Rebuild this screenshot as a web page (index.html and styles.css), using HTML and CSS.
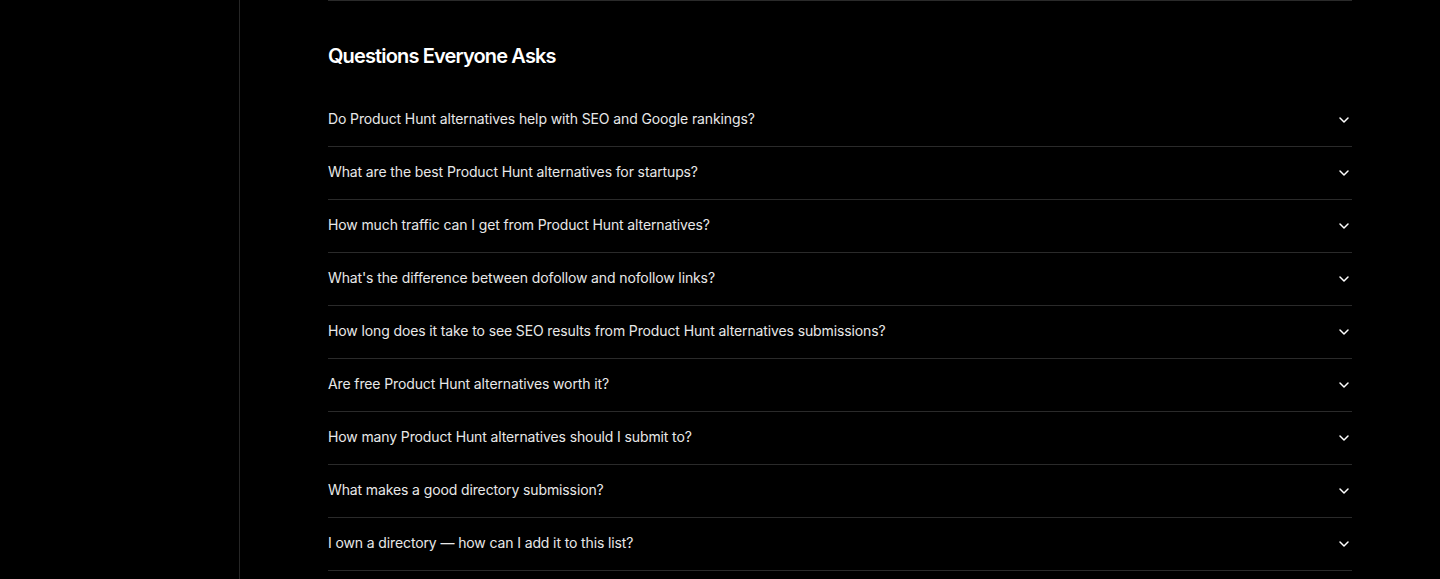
FILE: index.html
```html
<!DOCTYPE html>
<html lang="en">
<head>
<meta charset="utf-8">
<title>FAQ</title>
<link rel="stylesheet" href="styles.css">
</head>
<body>
<div class="layout">
  <aside class="sidebar"></aside>
  <main class="main">
    <div class="prev-section"></div>
    <section class="faq">
      <h2 class="faq-title">Questions Everyone Asks</h2>
      <div class="faq-list">
        <button class="faq-item"><span>Do Product Hunt alternatives help with SEO and Google rankings?</span><svg class="chev" viewBox="0 0 16 16"><path d="M4 6l4 4 4-4"/></svg></button>
        <button class="faq-item"><span>What are the best Product Hunt alternatives for startups?</span><svg class="chev" viewBox="0 0 16 16"><path d="M4 6l4 4 4-4"/></svg></button>
        <button class="faq-item"><span>How much traffic can I get from Product Hunt alternatives?</span><svg class="chev" viewBox="0 0 16 16"><path d="M4 6l4 4 4-4"/></svg></button>
        <button class="faq-item"><span>What's the difference between dofollow and nofollow links?</span><svg class="chev" viewBox="0 0 16 16"><path d="M4 6l4 4 4-4"/></svg></button>
        <button class="faq-item"><span>How long does it take to see SEO results from Product Hunt alternatives submissions?</span><svg class="chev" viewBox="0 0 16 16"><path d="M4 6l4 4 4-4"/></svg></button>
        <button class="faq-item"><span>Are free Product Hunt alternatives worth it?</span><svg class="chev" viewBox="0 0 16 16"><path d="M4 6l4 4 4-4"/></svg></button>
        <button class="faq-item"><span>How many Product Hunt alternatives should I submit to?</span><svg class="chev" viewBox="0 0 16 16"><path d="M4 6l4 4 4-4"/></svg></button>
        <button class="faq-item"><span>What makes a good directory submission?</span><svg class="chev" viewBox="0 0 16 16"><path d="M4 6l4 4 4-4"/></svg></button>
        <button class="faq-item"><span>I own a directory — how can I add it to this list?</span><svg class="chev" viewBox="0 0 16 16"><path d="M4 6l4 4 4-4"/></svg></button>
      </div>
    </section>
  </main>
</div>
</body>
</html>
```
FILE: styles.css
```css
html, body {
  margin: 0;
  padding: 0;
  background: #000;
  color: #ededed;
  font-family: Inter, "Noto Sans", "Liberation Sans", sans-serif;
  height: 579px;
  overflow: hidden;
}

.layout {
  display: flex;
  min-height: 579px;
}

.sidebar {
  width: 239px;
  flex: none;
  border-right: 1px solid #262626;
}

.main {
  flex: 1;
  padding: 0 88px;
}

.prev-section {
  width: 1024px;
  border-top: 1px solid #2a2a2a;
}

.faq {
  width: 1024px;
  padding-top: 41px;
}

.faq-title {
  margin: 0 0 24px;
  font-size: 20px;
  line-height: 28px;
  font-weight: 600;
  letter-spacing: -0.85px;
  color: #fff;
}

.faq-list {
  display: flex;
  flex-direction: column;
}

.faq-item {
  display: flex;
  align-items: center;
  justify-content: space-between;
  box-sizing: border-box;
  height: 53px;
  padding: 0 0 4px;
  background: none;
  border: 0;
  border-bottom: 1px solid #2a2a2a;
  color: #e8e8e8;
  font: inherit;
  font-size: 14px;
  letter-spacing: -0.12px;
  text-align: left;
  cursor: pointer;
}

.chev {
  width: 16px;
  height: 16px;
  margin-top: 4px;
  fill: none;
  stroke: #fff;
  stroke-width: 1.5;
  stroke-linecap: round;
  stroke-linejoin: round;
}
```
